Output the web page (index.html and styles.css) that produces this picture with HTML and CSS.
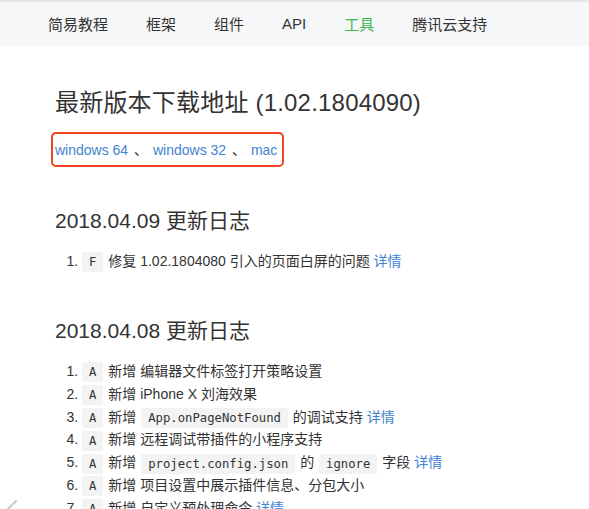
FILE: index.html
```html
<!DOCTYPE html>
<html lang="zh-CN">
<head>
<meta charset="utf-8">
<title>工具</title>
<link rel="stylesheet" href="styles.css">
</head>
<body>
<nav class="nav">
  <a class="nav-item">简易教程</a>
  <a class="nav-item">框架</a>
  <a class="nav-item">组件</a>
  <a class="nav-item">API</a>
  <a class="nav-item active">工具</a>
  <a class="nav-item">腾讯云支持</a>
</nav>
<main class="main">
  <h1 class="title">最新版本下载地址 (1.02.1804090)</h1>
  <p class="downloads"><span class="highlight"><a class="link">windows 64</a> <span class="sep">、</span> <a class="link">windows 32</a> <span class="sep">、</span> <a class="link">mac</a></span></p>

  <h2 class="log-title first">2018.04.09 更新日志</h2>
  <ol class="log">
    <li><code class="tag">F</code> 修复 1.02.1804080 引入的页面白屏的问题 <a class="link">详情</a></li>
  </ol>

  <h2 class="log-title">2018.04.08 更新日志</h2>
  <ol class="log">
    <li><code class="tag">A</code> 新增 编辑器文件标签打开策略设置</li>
    <li><code class="tag">A</code> 新增 iPhone X 刘海效果</li>
    <li><code class="tag">A</code> 新增 <code class="tag">App.onPageNotFound</code> 的调试支持 <a class="link">详情</a></li>
    <li><code class="tag">A</code> 新增 远程调试带插件的小程序支持</li>
    <li><code class="tag">A</code> 新增 <code class="tag">project.config.json</code> 的 <code class="tag">ignore</code> 字段 <a class="link">详情</a></li>
    <li><code class="tag">A</code> 新增 项目设置中展示插件信息、分包大小</li>
    <li><code class="tag">A</code> 新增 自定义预处理命令 <a class="link">详情</a></li>
  </ol>
</main>
<svg class="grip" width="14" height="14" viewBox="0 0 14 14"><path d="M2 13 L11 4" stroke="#c8c8c8" stroke-width="2" stroke-linecap="round"/></svg>
</body>
</html>
```

FILE: styles.css
```css
html, body {
  margin: 0;
  padding: 0;
  background: #fff;
  overflow: hidden;
}
body {
  font-family: "Liberation Sans", "Noto Sans CJK SC", sans-serif;
  font-size: 14px;
  color: #333;
  height: 509px;
  position: relative;
}
.nav {
  height: 46px;
  background: #f6f7f9;
  box-shadow: inset 0 3px 2px -1px rgba(0,0,0,0.07);
  display: flex;
  align-items: center;
  padding-left: 48px;
  padding-top: 1px;
  gap: 38px;
  box-sizing: border-box;
}
.nav-item {
  font-size: 15px;
  color: #333;
  text-decoration: none;
}
.nav-item.active {
  color: #3db548;
}
.main {
  padding-left: 55px;
}
.title {
  font-size: 24px;
  font-weight: normal;
  line-height: 29px;
  margin: 42px 0 0;
  color: #333;
  letter-spacing: 0.2px;
}
.downloads {
  margin: 15px 0 0 -4px;
  line-height: 20px;
}
.highlight {
  display: inline-block;
  border: 2px solid #f3431f;
  border-radius: 5px;
  padding: 6px 5px 5px 2px;
}
.sep {
  display: inline-block;
  padding: 0 1px 0 2px;
}
.link {
  color: #3f84d2;
  text-decoration: none;
}
.log-title {
  font-size: 21px;
  font-weight: normal;
  line-height: 25px;
  margin: 45px 0 0;
  color: #333;
}
.log-title.first {
  margin-top: 41px;
}
.log {
  margin: 17px 0 0;
  padding-left: 27px;
  line-height: 22.85px;
}
.log li {
  height: 22.85px;
}
.tag {
  display: inline-block;
  font-family: "DejaVu Sans Mono", monospace;
  font-size: 12.25px;
  line-height: 20px;
  height: 20px;
  padding: 0 7px;
  background: #f3f3f3;
  border-radius: 2px;
  margin: 0 1px;
  vertical-align: middle;
  color: #333;
}
.log li > .tag:first-child {
  margin-left: 0;
}
.grip {
  position: absolute;
  left: 5px;
  top: 497px;
}
```
